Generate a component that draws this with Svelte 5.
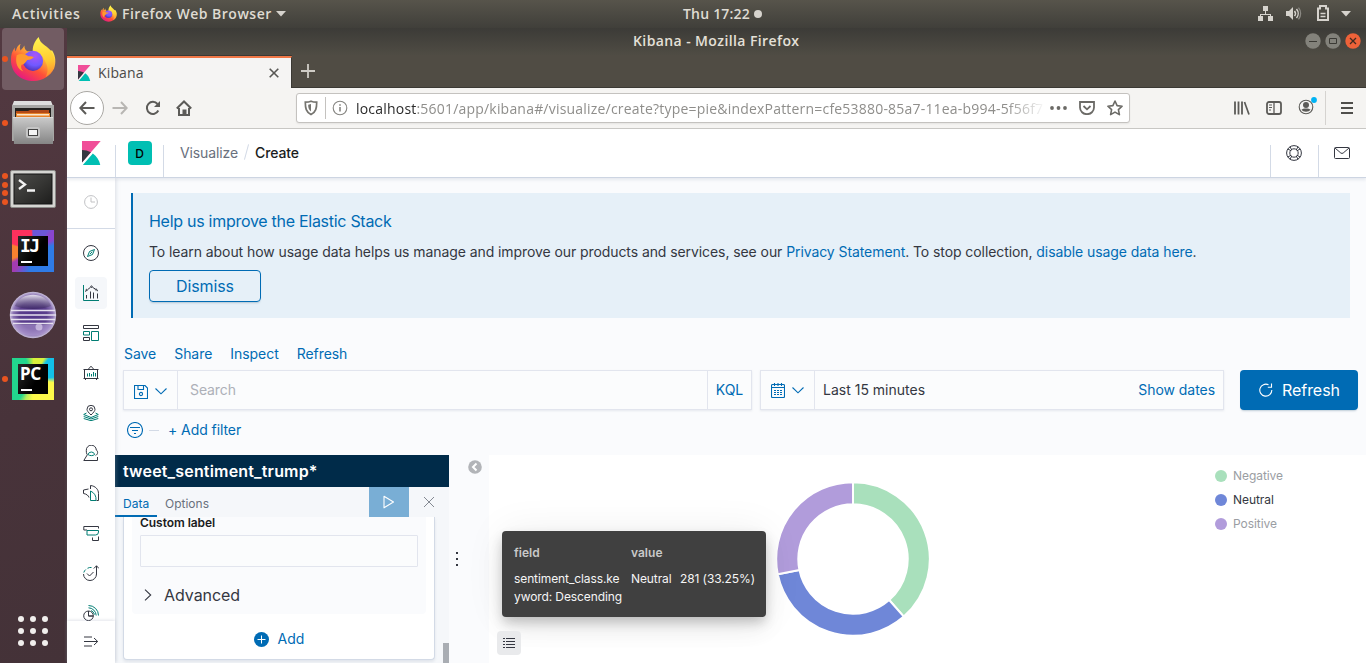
<script>
  const navIcons = [
    { id: 'discover' }, { id: 'visualize', active: true }, { id: 'dashboard' }, { id: 'canvas' }, { id: 'maps' },
    { id: 'ml' }, { id: 'metrics' }, { id: 'logs' }, { id: 'uptime' }, { id: 'apm' }
  ];
  const menu = ['Save', 'Share', 'Inspect', 'Refresh'];
  const slices = [
    { label: 'Negative', color: '#a9e0bc', from: 0, to: 138.6 },
    { label: 'Neutral', color: '#6f87d8', from: 138.6, to: 258.5, active: true },
    { label: 'Positive', color: '#b19cdb', from: 258.5, to: 360 }
  ];
  const R = 76.8, r = 54.7;
  const pt = (a, q) => {
    const t = (a * Math.PI) / 180;
    return `${(77 + q * Math.sin(t)).toFixed(2)} ${(77 - q * Math.cos(t)).toFixed(2)}`;
  };
  const arc = (s) => `M${pt(s.from, R)}A${R} ${R} 0 0 1 ${pt(s.to, R)}L${pt(s.to, r)}A${r} ${r} 0 0 0 ${pt(s.from, r)}Z`;
</script>

{#snippet kibana(size)}
  <svg width={size} height={size} viewBox="0 0 32 32">
    <path fill="#F04E98" d="M4 0v28.789L28.935.017z" />
    <path fill="#343741" d="M4 12v16.789l11.906-13.738A24.721 24.721 0 0 0 4 12" />
    <path fill="#00BFB3" d="M18.479 16.664 6.268 30.754l-1.073 1.237h23.191c-1.252-6.292-4.883-11.719-9.908-15.327" />
  </svg>
{/snippet}

{#snippet firefox(size)}
  <svg width={size} height={size} viewBox="0 0 48 48">
    <defs>
      <linearGradient id="ffBody" x1=".85" y1=".1" x2=".2" y2=".95">
        <stop offset="0" stop-color="#fff44f" /><stop offset=".35" stop-color="#ffa436" />
        <stop offset=".62" stop-color="#ff5138" /><stop offset="1" stop-color="#e31587" />
      </linearGradient>
      <linearGradient id="ffTail" x1=".5" y1="0" x2=".6" y2="1">
        <stop offset="0" stop-color="#fff44f" /><stop offset=".6" stop-color="#ffcb31" /><stop offset="1" stop-color="#ff8a2f" />
      </linearGradient>
      <radialGradient id="ffGlobe" cx=".6" cy=".25" r=".8">
        <stop offset="0" stop-color="#a956f8" /><stop offset=".6" stop-color="#7059ff" /><stop offset="1" stop-color="#4a2fb0" />
      </radialGradient>
    </defs>
    <path fill="url(#ffBody)" d="M11 8c-1 3-1 5 0 7 2-2 3-3 4-5 0 3 1 5 3 6h11l15-1c4 6 4 13 2 19-4 8-12 13-21 13C11 47 1 38 1 25c0-5 1-9 4-13 0 2 0 3 1 4C7 12 8 10 11 8z" />
    <path fill="url(#ffTail)" d="M30 1c1 5 4 7 8 10 5 4 9 9 8 18-1 7-4 11-9 14 3-5 3-11 0-16-2-5-6-9-13-9-1-6 1-12 6-17z" />
    <circle cx="24" cy="26" r="10.500" fill="url(#ffGlobe)" />
    <path fill="#ff9a2e" d="M7 20c4-2 9-1 12 1 2 0 4 0 6 1-2 2-4 3-7 3-2 3-4 5-6 5-1 3 0 5 2 7-6-2-9-9-7-17z" />
  </svg>
{/snippet}

{#snippet navIcon(id)}
  <svg class="ico" width="16" height="16" viewBox="0 0 16 16">
    {#if id === 'discover'}
      <circle cx="8" cy="8" r="7.500" /><path class="g" d="M11.500 4.500 9.500 9.500 4.500 11.500 6.500 6.500z" /><path class="g" d="M6.800 9.200 9.200 6.800" />
    {:else if id === 'visualize'}
      <path class="g" d="M.5 0v15.500H16" /><path d="M3.500 13.500V10M7.500 13.500V6.500M10.500 13.500V7.500M14.500 13.500V8.500M2 6.500l1.500-1M5 4.300l2.500-2M9.500 2.300l2.500 1.500M13.500 5l1.500 1" /><circle cx="8.500" cy="1.700" r=".8" /><circle cx="3.700" cy="5" r=".7" /><circle cx="13" cy="4.500" r=".7" />
    {:else if id === 'dashboard'}
      <path d="M.5.500h15v3H.5zM.5 12.500h6v3h-6z" /><path class="g" d="M.5 6.500h6v3.500h-6zM8.500 6.500h7v9h-7z" />
    {:else if id === 'canvas'}
      <path d="M1.500 4.500h13v9h-13zM.5 4.500h2M13.500 4.500h2M.5 13.500h2M13.500 13.500h2M2.500 15v-1.500M13.500 15v-1.500M5.500 4 8 1.200 10.500 4" /><path class="g" d="M4.500 11.500v-3M6.500 11.500V8M8.500 11.500V9M10.500 11.500V7M12.500 11.500V8" />
    {:else if id === 'maps'}
      <path d="M8 10C5.500 7.500 4 5.800 4 4.300a4 4 0 0 1 8 0C12 5.800 10.500 7.500 8 10z" /><circle cx="8" cy="4.300" r="1.500" /><path class="g" d="M3.500 8 .7 9.500 8 12.500l7.300-3L12.500 8M.7 11.500 8 14l7.300-2.500M.7 13.500 8 15.700l7.300-2.200" />
    {:else if id === 'ml'}
      <path d="M4 9.500C3.300 8 3.300 6.500 3.300 5.300a5 5 0 0 1 10-.3c1 .5 1.300 1.500 1.300 2.500 0 1.500-1 2.500-2 3M4.500 9.500.8 15.500h13.700v-3.500" /><path class="g" d="M5 9.500a3.500 3.500 0 0 1 6.700 0c-2 1.500-4.700 1.500-6.700 0z" />
    {:else if id === 'metrics'}
      <path d="M7.500 4V.5c5 .5 8 4 8 8v7h-2M5.500 4 .5 5v3.500c3 .5 5 2 5.500 4" /><path class="g" d="M7.500 6v9.500h5.500A9.500 9.500 0 0 0 7.500 6z" />
    {:else if id === 'logs'}
      <path d="M15.500 3.500v-2H.8v3.500H4M9.500 12.500v3h6V11.500" /><path class="g" d="M4 5.500h11.500v1.500a3 3 0 0 1-3 3H4z" />
    {:else if id === 'uptime'}
      <path d="M13.500 9.500V.8M10.800 3.500 13.500.8l2.500 2.700M.5 9a6.500 6.500 0 0 0 13 0M4 8.500l2.500 2.500 4-4" /><path class="g" d="M.8 7.500a6 6 0 0 1 2-3M4.500 3.300a6 6 0 0 1 4-.8" />
    {:else}
      <path d="M5.500 6A4.800 4.800 0 1 0 10.300 11H5.500zM5.500 11h4.800A4.800 4.800 0 0 0 5.500 6" /><path class="g" d="M5.500.5A10 10 0 0 1 15.500 10.500M5.500 2.800a8 8 0 0 1 7.700 7.700M8 5.500a6 6 0 0 1 3.500 4" />
    {/if}
  </svg>
{/snippet}

<div class="desktop">
  <header class="topbar">
    <span class="activities">Activities</span>
    {@render firefox(17)}
    <span class="appname">Firefox Web Browser</span>
    <svg width="10" height="6"><path d="M0 0h10L5 5.500z" fill="#d6d3cd" /></svg>
    <span class="clock">Thu 17:22</span><i class="notify"></i>
    <div class="tray">
      <svg width="16" height="16" fill="#d6d3cd"><path d="M5 0h5v5H5zM0 10h5v5H0zM10 10h5v5h-5zM7 5h1v3h5v2h-1V9H3v1H2V8h5z" /></svg>
      <svg width="16" height="14"><path fill="#d6d3cd" d="M0 4h3l4-4v13L3 9H0z" /><path fill="none" stroke="#d6d3cd" stroke-width="1.500" d="M8.500 4a4 4 0 0 1 0 5M10.500 2a7 7 0 0 1 0 9" /><path fill="none" stroke="#8b8983" stroke-width="1.300" d="M12.500.7a9 9 0 0 1 0 11.600" /></svg>
      <svg width="12" height="17" fill="none" stroke="#d6d3cd" stroke-width="2"><path d="M1 3.500h2V1h6v2.500h2V15H1z" /><path stroke-width="1.500" d="M3.500 8.500h5M3.500 11.500h5" /></svg>
      <svg width="10" height="6"><path d="M0 0h10L5 5.500z" fill="#d6d3cd" /></svg>
    </div>
  </header>

  <div class="session">
    <aside class="dock">
      <div class="app current"><i class="run"></i>{@render firefox(46)}</div>
      <div class="app files"><i class="run"></i>
        <svg width="44" height="46" viewBox="0 0 44 46">
          <defs><linearGradient id="cab" x1="0" y1="0" x2="0" y2="1"><stop offset="0" stop-color="#c9c9c9" /><stop offset="1" stop-color="#858585" /></linearGradient></defs>
          <path fill="#dedede" d="M3 1h37l2 5H1z" /><path fill="#a7a7a5" d="M1 5h42v36H1z" /><path fill="#242220" d="M4 8h36v12H4z" />
          <path fill="#b34a17" d="M5 11h12l2-1h19v9H5z" /><path fill="#e88228" d="M5 13h34v6H5z" /><path fill="#fbe6c9" d="M6 14h32v1.500H6z" />
          <path fill="url(#cab)" d="M2 17.500h40V44H3z" /><path fill="#dcdcdc" d="M2 17h40v1H2z" /><rect x="15" y="27" width="14" height="11" rx="2.500" fill="#c5c5c5" /><rect x="17.500" y="29.500" width="9" height="6" fill="#f4f4f4" stroke="#444" />
        </svg>
      </div>
      <div class="app term"><div class="runs"><i></i><i></i><i></i><i></i></div>
        <svg width="46" height="38" viewBox="0 0 46 38">
          <defs><linearGradient id="scr" x1="0" y1="0" x2="1" y2="1"><stop offset="0" stop-color="#4c4c4a" /><stop offset=".5" stop-color="#373735" /><stop offset="1" stop-color="#1d1d1c" /></linearGradient></defs>
          <rect x=".5" y=".5" width="45" height="37" rx="1.500" fill="#d5d5d2" stroke="#8a8a88" /><rect x="4" y="4" width="38" height="30" fill="url(#scr)" stroke="#151515" />
          <path d="M9 10l6 4.500L9 19M17 20.500h8" fill="none" stroke="#f2f2f2" stroke-width="2.300" />
        </svg>
      </div>
      <div class="app ij"><div class="jb"><span>IJ</span></div></div>
      <div class="app ecl">
        <svg width="48" height="48" viewBox="0 0 48 48">
          <defs>
            <radialGradient id="ec" cx=".5" cy=".5" r=".5"><stop offset="0" stop-color="#52358a" /><stop offset=".6" stop-color="#5b3f8c" /><stop offset=".85" stop-color="#8a72b3" /><stop offset="1" stop-color="#c9bfdb" /></radialGradient>
            <linearGradient id="ecTop" x1="0" y1="0" x2="0" y2="1"><stop offset="0" stop-color="#f3f0f8" stop-opacity=".85" /><stop offset="1" stop-color="#2c1a50" stop-opacity=".5" /></linearGradient>
          </defs>
          <circle cx="24" cy="24" r="23.200" fill="url(#ec)" />
          <path d="M6 15C12 0 36 0 42 15 32 19 16 19 6 15z" fill="url(#ecTop)" />
          <path d="M5 34h38C38 48 10 48 5 34z" fill="#b49fd6" opacity=".55" /><circle cx="30" cy="36" r="3.500" fill="#eee6fa" opacity=".55" />
          <path d="M2 19.500h44M1 24h46M2 28.500h44M4 32.500h40" stroke="#e6e1ee" stroke-width="1.300" />
        </svg>
      </div>
      <div class="app pc"><i class="run"></i><div class="jb"><span>PC</span></div></div>
      <div class="grid9">{#each Array(9) as _}<i></i>{/each}</div>
    </aside>

    <section class="window">
      <div class="title">
        <span>Kibana - Mozilla Firefox</span>
        <div class="wm">
          <svg width="16" height="16"><circle cx="8" cy="8" r="7.700" fill="#83827b" /><path d="M4 8.500h8" stroke="#3b3a35" /></svg>
          <svg width="16" height="16"><circle cx="8" cy="8" r="7.700" fill="#83827b" /><path d="M4.500 5.500h7v5h-7z" fill="none" stroke="#3b3a35" /></svg>
          <svg width="16" height="16"><circle cx="8" cy="8" r="7.700" fill="#ee6239" /><path d="M5 5l6 6M11 5l-6 6" stroke="#3f2a20" stroke-width="1.300" /></svg>
        </div>
      </div>
      <div class="tabs">
        <div class="tab">{@render kibana(16)}<span>Kibana</span>
          <svg width="10" height="10"><path d="M.7.700l8.600 8.600M9.300.700L.7 9.300" stroke="#585754" stroke-width="1.600" /></svg>
        </div>
        <svg class="plus" width="14" height="14"><path d="M7 0v14M0 7h14" stroke="#cfccc6" stroke-width="1.800" /></svg>
      </div>

      <div class="toolbar">
        <span class="back"><svg width="16" height="14" viewBox="0 0 16 14"><path d="M15.500 7H1.500M7 1 1.300 7 7 13" /></svg></span>
        <svg class="fwd" width="16" height="14" viewBox="0 0 16 14"><path d="M.5 7h14M9 1l5.700 6L9 13" /></svg>
        <svg class="reload" width="16" height="16" viewBox="0 0 16 16"><path d="M13.300 10.500A6 6 0 1 1 12.500 4" /><path d="M15 1v6H9z" fill="#4f4e4b" stroke="none" /></svg>
        <svg class="home" width="16" height="16" viewBox="0 0 16 16"><path d="M.8 8.500 8 1.500l7.200 7M3 8v7h10V8" /><path d="M7.500 15v-4.500h2V15" /></svg>
        <div class="urlbar">
          <svg width="14" height="16" viewBox="0 0 14 16"><path d="M7 1.200c-2 .9-3.800 1-5.700 1C1.300 8 2 12 7 14.500 12 12 12.700 8 12.700 2.200c-1.900 0-3.700-.1-5.700-1z" fill="none" stroke="#75746f" stroke-width="1.700" /><path d="M7 4v7.500C4.500 9.500 4.200 7.500 4.200 4.700z" fill="#75746f" /></svg>
          <i class="sep"></i>
          <svg width="16" height="16" viewBox="0 0 16 16"><circle cx="8" cy="8" r="6.800" fill="none" stroke="#858480" stroke-width="1.100" /><path d="M8 7v4.500M8 4.200v1.600" stroke="#858480" stroke-width="1.600" /></svg>
          <span class="url"><b>localhost</b>:5601/app/kibana#/visualize/create?type=pie&amp;indexPattern=cfe53880-85a7-11ea-b994-5f56f7</span>
          <svg width="17" height="4" fill="#6b6a66"><circle cx="2" cy="2" r="1.900" /><circle cx="8.500" cy="2" r="1.900" /><circle cx="15" cy="2" r="1.900" /></svg>
          <svg class="pocket" width="16" height="14" viewBox="0 0 16 14"><path d="M1 1h14v5.500a7 6.700 0 0 1-14 0zM4.500 5 8 8.300 11.500 5" fill="none" stroke="#6b6a66" stroke-width="1.800" /></svg>
          <svg width="16" height="16" viewBox="0 0 16 16"><path d="M8 1l2.100 4.600 5 .6-3.700 3.400 1 5L8 12.100l-4.400 2.500 1-5L.9 6.200l5-.6z" fill="none" stroke="#6b6a66" stroke-width="1.600" stroke-linejoin="round" /></svg>
        </div>
        <div class="tools">
          <svg width="16" height="14" viewBox="0 0 16 14"><path d="M1 .5v13M4.500.500v13M8 .5v13" stroke="#5c5b58" stroke-width="1.800" /><path d="M10.500 1l4.500 12.500" stroke="#5c5b58" stroke-width="1.700" /></svg>
          <svg width="16" height="14" viewBox="0 0 16 14"><rect x="1" y="1" width="14" height="12" rx="2" fill="none" stroke="#5c5b58" stroke-width="1.800" /><path d="M8 1v12" stroke="#5c5b58" stroke-width="1.300" /><path d="M3 4h3M3 6.500h3M3 9h2" stroke="#5c5b58" /></svg>
          <svg class="acct" width="19" height="20" viewBox="0 0 19 20"><circle cx="8" cy="11" r="6.800" fill="none" stroke="#5c5b58" stroke-width="1.100" /><circle cx="8" cy="9" r="3" fill="#5c5b58" /><path d="M3.500 13.500C5 12 11 12 12.500 13.500 11 16.500 5 16.500 3.500 13.500z" fill="#5c5b58" /><circle cx="16" cy="4" r="2.900" fill="#00b3f4" /></svg>
          <i class="tsep"></i>
          <svg width="12" height="12"><path d="M0 1h12M0 6h12M0 11h12" stroke="#4f4e4b" stroke-width="2" /></svg>
        </div>
      </div>

      <div class="khead">
        <div class="cell">{@render kibana(24)}</div><i class="rule"></i>
        <div class="cell w47"><b class="space">D</b></div><i class="rule"></i>
        <nav class="crumbs"><span>Visualize</span><em></em><strong>Create</strong></nav>
        <i class="rule"></i>
        <div class="cell w47 act"><svg class="ico" width="16" height="16" viewBox="0 0 16 16"><circle cx="8" cy="8" r="7.400" /><circle cx="8" cy="8" r="4.200" /><path d="M4 1.800 5.800 5M1.900 4l3.200 1.800M12 1.800 10.200 5M14.100 4l-3.200 1.800M4 14.200 5.800 11M1.900 12l3.200-1.800M12 14.200 10.200 11M14.100 12l-3.200-1.800" /></svg></div><i class="rule"></i>
        <div class="cell w47 act"><svg class="ico" width="16" height="12" viewBox="0 0 16 12"><rect x=".5" y=".5" width="15" height="11" rx="1" /><path d="M1 1l5.800 5a2 2 0 0 0 2.400 0L15 1" /></svg></div>
      </div>

      <div class="kbody">
        <nav class="knav">
          <div class="recent"><svg class="ico faded" width="14" height="14" viewBox="0 0 14 14"><circle cx="7" cy="7" r="6.400" /><path d="M7 2.500V7h4" /></svg></div>
          <div class="links">
            {#each navIcons as n}<div class="link" class:active={n.active}>{@render navIcon(n.id)}</div>{/each}
          </div>
          <div class="collapse"><svg class="ico" width="16" height="11" viewBox="0 0 16 11"><path d="M1 1h8M1 5.500h13.500M1 10h8M11 2l3.700 3.500L11 9" /></svg></div>
        </nav>

        <main>
          <section class="callout">
            <h3>Help us improve the Elastic Stack</h3>
            <p>To learn about how usage data helps us manage and improve our products and services, see our <a>Privacy Statement</a>. To stop collection, <a>disable usage data here</a>.</p>
            <button>Dismiss</button>
          </section>
          <div class="menu">{#each menu as m}<span>{m}</span>{/each}</div>
          <div class="query">
            <div class="box qbox">
              <div class="pick">
                <svg width="14" height="14" viewBox="0 0 14 14"><path d="M.5.500h10.500l2.500 2.500v10.500H.5zM4 .5v4h5.500v-4" /><circle cx="7" cy="9" r="1.600" /></svg>
                <svg width="12" height="7" viewBox="0 0 12 7"><path d="M.5.500 6 5.800 11.500.500" /></svg>
              </div>
              <span class="ph">Search</span><span class="kql">KQL</span>
            </div>
            <div class="box dbox">
              <div class="pick">
                <svg width="14" height="15" viewBox="0 0 14 15"><rect x=".5" y="1.500" width="13" height="13" rx="1" /><path d="M.5 4.500h13M3.500 0v3M7 0v3M10.500 0v3" /><path stroke-dasharray="2 1" d="M3 7.500h8M3 9.500h8M3 11.500h8" /></svg>
                <svg width="12" height="7" viewBox="0 0 12 7"><path d="M.5.500 6 5.800 11.500.500" /></svg>
              </div>
              <span class="range">Last 15 minutes</span><a>Show dates</a>
            </div>
            <div class="refresh"><svg width="14" height="14" viewBox="0 0 14 14"><path d="M9.500 1.800A6 6 0 1 0 12.800 7M12.500.500v3.800H8.800" fill="none" stroke="#fff" stroke-width="1.100" /></svg><span>Refresh</span></div>
          </div>
          <div class="filters">
            <svg width="16" height="16" viewBox="0 0 16 16"><circle cx="8" cy="8" r="7.500" /><path d="M3 5.500h10M5 8.500h6M7 11.500h2" /></svg>
            <i></i><a>+ Add filter</a>
          </div>

          <div class="editor">
            <div class="side">
              <div class="index">tweet_sentiment_trump*</div>
              <div class="stabs">
                <span class="on">Data</span><span class="opt">Options</span>
                <div class="play"><svg width="12" height="14" viewBox="0 0 12 14"><path d="M1 1.200 10.500 7 1 12.800z" fill="none" stroke="#fff" stroke-width="1.100" stroke-linejoin="round" /></svg></div>
                <div class="x"><svg width="12" height="12"><path d="M1 1l10 10M11 1L1 11" stroke="#848992" /></svg></div>
              </div>
              <div class="scroll">
                <div class="card">
                  <div class="agg">
                    <label>Custom label</label>
                    <div class="input"></div>
                    <div class="adv"><svg width="8" height="12" viewBox="0 0 8 12"><path d="M1 .7 6.700 6 1 11.300" fill="none" stroke="#343741" stroke-width="1.100" /></svg><span>Advanced</span></div>
                  </div>
                  <div class="add"><svg width="15" height="15"><circle cx="7.500" cy="7.500" r="7.500" fill="#006bb4" /><path d="M7.500 3.500v8M3.500 7.500h8" stroke="#fff" /></svg><span>Add</span></div>
                </div>
                <i class="thumb"></i>
              </div>
            </div>
            <div class="gutter">
              <svg class="hide" width="14" height="14"><circle cx="7" cy="7" r="6.800" fill="#b2b4b8" /><path d="M8.500 3.500 5 7l3.500 3.500" fill="none" stroke="#fff" stroke-width="2" /></svg>
              <svg class="drag" width="2" height="14" fill="#343741"><path d="M0 0h2v2H0zM0 6h2v2H0zM0 12h2v2H0z" /></svg>
            </div>
            <div class="vis">
              <svg class="donut" width="154" height="154" viewBox="0 0 154 154">
                {#each slices as s}<path d={arc(s)} fill={s.color} stroke="#fff" stroke-width="2" />{/each}
              </svg>
              <ul class="legend">{#each slices as s}<li class:active={s.active}><i style="background:{s.color}"></i>{s.label}</li>{/each}</ul>
              <div class="tip">
                <b>field</b><b class="v">value</b>
                <span>sentiment_class.ke<br />yword: Descending</span><span>Neutral</span><span>281 (33.25%)</span>
              </div>
              <div class="lbtn"><svg width="12" height="11"><path d="M0 .5h2M3 .5h9M0 3.500h2M3 3.500h9M0 6.500h2M3 6.500h9M0 9.500h2M3 9.500h9" stroke="#343741" /></svg></div>
            </div>
          </div>
        </main>
      </div>
    </section>
  </div>
</div>

<style>
  :global(body) { margin: 0; overflow: hidden; }
  * { box-sizing: border-box; }
  svg { display: block; flex: none; }
  a { color: #006bb4; }
  .desktop { width: 1366px; height: 663px; overflow: hidden; display: flex; flex-direction: column; font-family: Inter, sans-serif; font-size: 14px; color: #343741; background: #fff; }
  .topbar { height: 28px; flex: none; display: flex; align-items: center; padding: 0 15px 1px 12px; background: linear-gradient(#57544b, #403f3a); color: #dfdbd2; font: 600 14px/27px "Open Sans", sans-serif; }
  .activities { width: 88px; letter-spacing: .72px; }
  .appname { margin: 0 4px 0 5px; width: 150px; white-space: nowrap; letter-spacing: .5px; }
  .clock { margin-left: 397px; width: 68px; white-space: nowrap; letter-spacing: .2px; }
  .notify { width: 8px; height: 8px; margin-left: 3px; border-radius: 50%; background: #d6d3cd; }
  .tray { margin-left: auto; display: flex; align-items: center; gap: 12px; }
  .tray svg:nth-child(3) { margin-left: 3px; }
  .session { flex: 1; min-height: 0; display: flex; }
  .dock { width: 67px; flex: none; display: flex; flex-direction: column; align-items: center; background: linear-gradient(160deg, #533941, #48333a 60%, #443238); }
  .app { position: relative; width: 62px; height: 62px; margin-left: -1px; display: flex; align-items: center; justify-content: center; flex: none; }
  .app.current { background: #725c63; border-radius: 4px; }
  .run, .runs { position: absolute; left: 0; top: 28px; }
  .run, .runs i { width: 6px; height: 6px; border-radius: 50%; background: #e95420; }
  .runs { top: 15px; display: flex; flex-direction: column; gap: 2.500px; }
  .files { margin-top: 2px; }
  .term { margin-top: 4px; }
  .ij { margin-top: 0; }
  .ecl { margin-top: 2px; }
  .pc { margin-top: 2px; }
  .jb { width: 42px; height: 42px; padding: 6px; }
  .jb span { display: block; width: 30px; height: 30px; background: linear-gradient(120deg, #2a2a2a, #000 60%); color: #fff; font: 700 17px/20px "Noto Sans", sans-serif; padding-left: 2px; letter-spacing: -.2px; }
  .jb span::after { content: ''; display: block; width: 11px; height: 2px; background: #fff; margin: 5px 0 0 1px; }
  .ij span { font-family: "DejaVu Sans Mono", monospace; font-size: 18px; letter-spacing: -1.500px; }
  .ij .jb { background: conic-gradient(from 0deg at 50% 50%, #6b57d8 0 35deg, #8a45cf 45deg 60deg, #2f7be6 75deg 190deg, #5a5fd8 205deg, #a33bb0 225deg 240deg, #f8812f 250deg 285deg, #fe315d 290deg 355deg, #6b57d8); }
  .pc .jb { background: conic-gradient(from 0deg, #d8f03c 0 28deg, #12c0e8 38deg 85deg, #fcf84a 100deg 180deg, #b8ee5a 200deg, #22d68e 215deg 340deg, #c8f03c); }
  .grid9 { margin: auto 1px 17px 0; display: grid; grid-template-columns: repeat(3, 6px); gap: 6px; }
  .grid9 i { width: 6px; height: 6px; border-radius: 50%; background: #f1efed; }
  .window { flex: 1; min-width: 0; display: flex; flex-direction: column; background: #504c44; }
  .title { height: 27px; flex: none; display: flex; align-items: center; background: linear-gradient(#3c3b37, #4f4c44); color: #e4e0d8; font: 600 14px/25px "Open Sans", sans-serif; }
  .title span { margin-left: 566px; width: 175px; white-space: nowrap; letter-spacing: .4px; padding-bottom: 2px; }
  .wm { margin-left: auto; display: flex; gap: 4px; padding: 0 5px 1px 0; }
  .tabs { height: 33px; flex: none; display: flex; align-items: center; border-bottom: 1px solid #3b3934; }
  .tab { width: 225px; height: 32px; margin-top: 1px; align-self: flex-start; display: flex; align-items: center; border-top: 2px solid #f07746; border-right: 1px solid #3b3934; background: #f5f4f3; padding: 0 12px 0 9px; font: 14px "Open Sans", sans-serif; color: #4b4a47; box-shadow: 0 -1px #3b3934; }
  .tab span { flex: 1; margin-left: 6px; padding-bottom: 2px; letter-spacing: .15px; }
  .plus { margin-left: 9px; }
  .toolbar { height: 41px; flex: none; display: flex; align-items: center; background: #f5f4f2; border-bottom: 1px solid #c9c8c5; padding: 0 13px 0 3px; }
  .toolbar > svg path, .back path { fill: none; stroke: #5c5b58; stroke-width: 2; }
  .toolbar > .fwd path { stroke: #b8b6b3; }
  .toolbar > .reload path:last-child { fill: #5c5b58; stroke: none; }
  .back { width: 34px; height: 34px; border: 1px solid #aaa8a4; border-radius: 50%; background: #fff; display: flex; align-items: center; justify-content: center; }
  .fwd { margin-left: 8px; }
  .reload { margin-left: 17px; }
  .home { margin-left: 15px; }
  .urlbar { width: 834px; height: 30px; margin-left: 104px; display: flex; align-items: center; border: 1px solid #c4c2bf; border-radius: 3px; background: #fff; padding: 0 6px 0 7px; box-shadow: 0 1px 2px #0001; }
  .sep { width: 1px; height: 22px; background: #c4c2bf; margin: 0 6px 0 7px; }
  .url { width: 688px; margin: 1px 7px 0 8px; overflow: hidden; white-space: nowrap; font: 14px/20px "Open Sans", sans-serif; letter-spacing: .2px; color: #8f8e8b; -webkit-mask: linear-gradient(90deg, #000 650px, transparent 690px); mask: linear-gradient(90deg, #000 650px, transparent 690px); }
  .url b { font-weight: 400; color: #2b2b2b; }
  .pocket { margin: 0 12px; }
  .tools { margin-left: auto; display: flex; align-items: center; }
  .tools svg + svg { margin-left: 16px; }
  .tools .acct { margin: 0 0 5px 16px; }
  .tools svg:first-child { margin-right: 0; }
  .tsep { width: 1px; height: 34px; background: #d5d3d0; margin: 0 15px 0 8px; }
  .khead { position: relative; z-index: 3; height: 49px; flex: none; display: flex; align-items: center; background: #fff; border-bottom: 1px solid #cdd5e2; box-shadow: 0 2px 3px #98a2b333; }
  .cell { width: 48px; display: flex; justify-content: center; }
  .w47 { width: 47px; }
  .act { padding-right: 1px; }
  .act svg { margin-right: 1px; }
  .rule { width: 1px; height: 32px; align-self: flex-end; background: #d3dae6; }
  .space { width: 24px; height: 24px; border-radius: 4px; background: #00bfb3; color: #000; font: 500 12px/25px Inter, sans-serif; text-align: center; }
  .crumbs { flex: 1; display: flex; align-items: center; padding: 0 0 2px 16px; letter-spacing: -.12px; color: #69707d; }
  .crumbs em { width: 1px; height: 16px; background: #d3dae6; margin: 0 8px; transform: rotate(15deg); }
  .crumbs strong { font-weight: 500; color: #1a1c21; }
  .ico { fill: none; stroke: #343741; }
  .ico .g { stroke: #017d73; }
  .faded { opacity: .3; }
  .kbody { flex: 1; min-height: 0; display: flex; }
  .knav { position: relative; z-index: 2; width: 48px; flex: none; display: flex; flex-direction: column; background: #fff; box-shadow: 1px 0 4px #98a2b355; }
  .recent { height: 51px; border-bottom: 1px solid #d3dae6; display: flex; align-items: center; justify-content: center; flex: none; padding: 0 1px 2px 0; }
  .links { flex: 1; min-height: 0; overflow: hidden; padding: 8px; display: flex; flex-direction: column; gap: 8px; }
  .link { height: 32px; flex: none; display: flex; align-items: center; justify-content: center; border-radius: 4px; }
  .link.active { background: #f5f7fa; }
  .collapse { height: 42px; flex: none; display: flex; align-items: center; justify-content: center; padding-bottom: 2px; box-shadow: 0 -1px 3px #98a2b344; }
  main { flex: 1; min-width: 0; display: flex; flex-direction: column; background: #fafbfd; }
  .callout { margin: 15px 16px 0; height: 125px; flex: none; border-left: 2px solid #006bb4; background: #e6f0f8; padding: 16px; }
  h3 { margin: 0; font-weight: 400; font-size: 16px; line-height: 24px; color: #006bb4; letter-spacing: -.28px; }
  p { margin: 8px 0 7px; line-height: 22px; white-space: nowrap; letter-spacing: -.08px; }
  button { display: block; width: 112px; height: 32px; border: 1px solid #006bb4; border-radius: 4px; background: none; padding: 0; font: 16px Inter, sans-serif; color: #006bb4; letter-spacing: -.1px; box-shadow: 0 2px 2px -1px #36617e4d; }
  .menu { height: 52px; flex: none; display: flex; align-items: flex-end; gap: 18px; padding: 0 9px 6px; line-height: 20px; color: #006bb4; letter-spacing: -.05px; }
  .query { height: 40px; flex: none; display: flex; padding: 0 8px; }
  .box { height: 40px; display: flex; align-items: center; border: 1px solid #e2e5ee; background: #fbfcfd; box-shadow: 0 1px 2px #98a2b333; letter-spacing: -.05px; }
  .qbox { width: 629px; }
  .dbox { width: 464px; margin-left: 8px; padding-right: 8px; }
  .pick { width: 54px; height: 38px; border-right: 1px solid #e2e5ee; display: flex; align-items: center; gap: 7px; padding: 3px 0 0 10px; }
  .pick svg, .filters svg { fill: none; stroke: #006bb4; stroke-width: 1.100; }
  .dbox .pick { padding-top: 0; }
  .ph { flex: 1; padding: 0 0 2px 12px; color: #adb0b8; letter-spacing: -.1px; }
  .kql { width: 44px; height: 38px; line-height: 38px; text-align: center; border-left: 1px solid #e2e5ee; color: #006bb4; }
  .range { flex: 1; padding: 0 0 2px 8px; letter-spacing: 0; }
  .dbox a { padding-bottom: 2px; }
  .refresh { width: 118px; margin-left: 16px; border-radius: 4px; background: #006bb4; color: #fff; display: flex; align-items: center; gap: 9px; padding-left: 19px; font-size: 16px; box-shadow: 0 2px 2px -1px #36617e4d; letter-spacing: -.05px; }
  .filters { height: 45px; flex: none; display: flex; align-items: center; padding: 0 0 5px 12px; letter-spacing: -.07px; }
  .filters i { width: 10px; height: 1px; background: #d3dae6; margin: 0 9px 0 6px; }
  .filters a { padding-bottom: 2px; }
  .editor { flex: 1; min-height: 0; display: flex; }
  .side { width: 334px; flex: none; display: flex; flex-direction: column; background: #f5f7fa; }
  .index { height: 32px; flex: none; background: #002b49; color: #fff; font-weight: 600; font-size: 16px; line-height: 32px; padding-left: 8px; letter-spacing: .18px; }
  .stabs { height: 30px; flex: none; display: flex; font-size: 12px; line-height: 33px; color: #69707d; }
  .on { width: 42px; padding-left: 8px; border-bottom: 2px solid #006bb4; color: #006bb4; }
  .opt { flex: 1; padding-left: 8px; }
  .play { width: 40px; background: #79aed5; display: flex; align-items: center; justify-content: center; }
  .x { width: 40px; display: flex; align-items: center; justify-content: center; }
  .scroll { flex: 1; min-height: 0; display: flex; justify-content: space-between; padding-left: 8px; }
  .card { width: 312px; height: 143px; border: 1px solid #d3dae6; border-top: 0; border-radius: 0 0 4px 4px; background: #fff; padding: 0 8px; box-shadow: 0 2px 3px #98a2b333; }
  .agg { height: 97px; background: #fafbfd; border-radius: 0 0 4px 4px; padding: 0 8px; }
  label { display: block; height: 18px; font-size: 12px; font-weight: 600; line-height: 12px; color: #1a1c21; letter-spacing: -.05px; }
  .input { height: 32px; border: 1px solid #e2e5ee; background: #fbfcfd; border-radius: 1px; }
  .adv { display: flex; align-items: center; gap: 12px; margin: 18px 0 0 4px; font-size: 16px; line-height: 20px; letter-spacing: -.06px; }
  .add { display: flex; align-items: center; justify-content: center; gap: 9px; margin-top: 15px; line-height: 20px; color: #006bb4; }
  .thumb { width: 6px; height: 20px; align-self: flex-end; background: #a9adb3; }
  .gutter { width: 40px; flex: none; display: flex; flex-direction: column; }
  .hide { margin: 5px 0 0 19px; }
  .drag { margin: 78px 0 0 7px; }
  .vis { position: relative; flex: 1; min-width: 0; background: #fff; display: flex; justify-content: space-between; }
  .donut { margin: 27px 0 0 286.500px; }
  .legend { list-style: none; margin: 9px 0 0; padding: 0; width: 151px; font-size: 12px; line-height: 24px; color: #9a9da3; letter-spacing: -.06px; }
  .legend li { display: flex; align-items: center; gap: 6px; }
  .legend i { width: 12px; height: 12px; border-radius: 50%; }
  .legend .active { color: #343741; }
  .tip { position: absolute; left: 13px; top: 76px; width: 264px; height: 86px; border-radius: 4px; background: #404040; color: #f5f5f5; padding: 13px 12px 11px; display: grid; grid-template-columns: 117px 49px 1fr; grid-template-rows: 26px 36px; font-size: 12px; line-height: 18px; letter-spacing: -.1px; box-shadow: 0 6px 12px -1px #0003, 0 0 40px #0001, 0 12px 24px #0001; white-space: nowrap; }
  .tip b { font-weight: 600; color: #c9c9c9; letter-spacing: .02px; }
  .tip .v { grid-column: 2 / 4; }
  .lbtn { position: absolute; left: 8px; bottom: 8px; width: 24px; height: 24px; border-radius: 4px; background: #e9eaec; display: flex; align-items: center; justify-content: center; }
</style>
